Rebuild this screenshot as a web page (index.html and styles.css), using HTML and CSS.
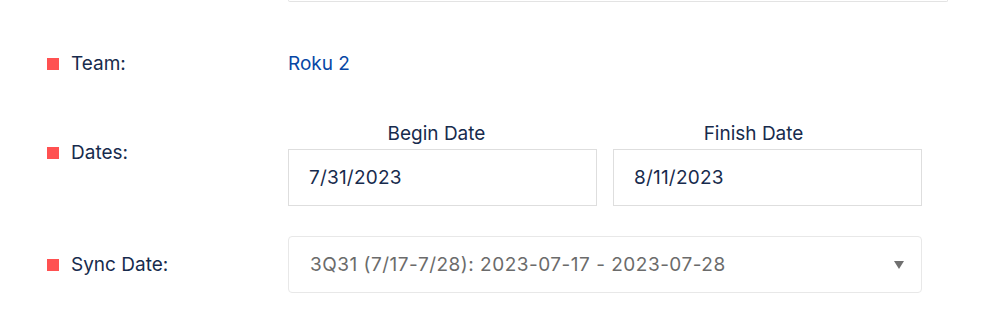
FILE: index.html
```html
<!DOCTYPE html>
<html>
<head>
<meta charset="utf-8">
<link rel="stylesheet" href="styles.css">
</head>
<body>
<div class="form">
  <div class="row row-top">
    <div></div>
    <div class="top-box"></div>
  </div>
  <div class="row row-team">
    <div class="label"><span class="bullet"></span>Team:</div>
    <div class="value"><a class="link" href="#">Roku 2</a></div>
  </div>
  <div class="row row-dates">
    <div class="label label-dates"><span class="bullet"></span>Dates:</div>
    <div class="dates">
      <div class="date-heads">
        <div class="date-head">Begin Date</div>
        <div class="date-head">Finish Date</div>
      </div>
      <div class="date-inputs">
        <div class="input">7/31/2023</div>
        <div class="input">8/11/2023</div>
      </div>
    </div>
  </div>
  <div class="row row-sync">
    <div class="label"><span class="bullet"></span>Sync Date:</div>
    <div class="select">
      <span class="select-text">3Q31 (7/17-7/28): 2023-07-17 - 2023-07-28</span>
      <span class="arrow"></span>
    </div>
  </div>
</div>
</body>
</html>
```
FILE: styles.css
```css
html, body {
  margin: 0;
  padding: 0;
  background: #ffffff;
}
body {
  font-family: Inter, "Noto Sans", "Liberation Sans", sans-serif;
  font-size: 19px;
  color: #172b4d;
}
.form {
  padding-left: 47px;
  width: 901px;
}
.row {
  display: grid;
  grid-template-columns: 241px 1fr;
}
.top-box {
  width: 658px;
  height: 1px;
  border: 1px solid #e3e3e3;
  border-top: none;
  border-radius: 0 0 3px 3px;
}
.row-team {
  margin-top: 50px;
  align-items: center;
  line-height: 24px;
}
.label {
  display: flex;
  align-items: center;
  line-height: 24px;
}
.bullet {
  width: 12px;
  height: 12px;
  background: #ff5151;
  margin-right: 12px;
  flex: none;
}
.link {
  color: #0747a6;
  text-decoration: none;
}
.row-dates {
  margin-top: 46px;
}
.label-dates {
  align-self: start;
  padding-top: 19px;
}
.date-heads {
  display: grid;
  grid-template-columns: 297px 337px;
  margin-bottom: 3px;
}
.date-head {
  text-align: center;
  line-height: 24px;
}
.date-inputs {
  display: flex;
  gap: 16px;
}
.input {
  box-sizing: border-box;
  width: 309px;
  height: 57px;
  border: 1px solid #dedede;
  display: flex;
  align-items: center;
  padding-left: 20px;
  letter-spacing: 0.2px;
}
.row-sync {
  margin-top: 30px;
  align-items: center;
}
.select {
  box-sizing: border-box;
  width: 634px;
  height: 57px;
  border: 1px solid #e8e8e8;
  border-radius: 4px;
  display: flex;
  align-items: center;
  justify-content: space-between;
  padding: 0 17px 0 21px;
}
.select-text {
  color: #6b6b6b;
  letter-spacing: 0.5px;
}
.arrow {
  width: 0;
  height: 0;
  border-left: 5px solid transparent;
  border-right: 5px solid transparent;
  border-top: 8px solid #707070;
  margin-top: 1px;
}
```
